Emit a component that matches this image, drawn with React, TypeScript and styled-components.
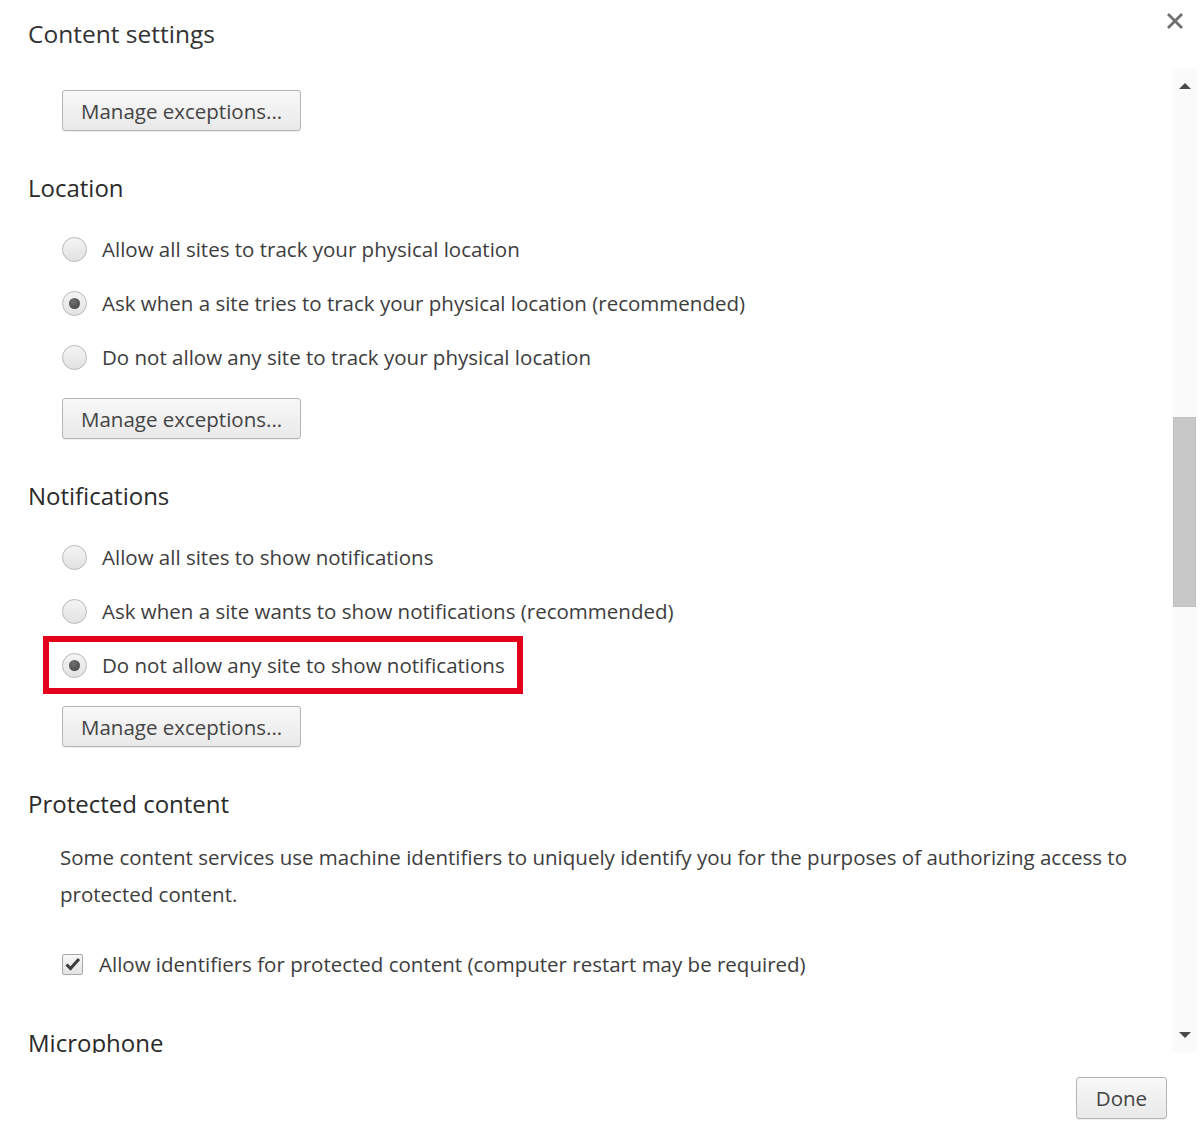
import styled, { createGlobalStyle } from 'styled-components';

type TOption = {
  id: string;
  label: string;
  checked?: boolean;
  highlighted?: boolean;
}

type TSection = {
  id: string;
  title: string;
  options?: Array<TOption>;
  exceptions?: boolean;
}

const locationOptions: Array<TOption> = [
  { id: 'loc-allow', label: 'Allow all sites to track your physical location' },
  { id: 'loc-ask', label: 'Ask when a site tries to track your physical location (recommended)', checked: true },
  { id: 'loc-block', label: 'Do not allow any site to track your physical location' },
];

const notificationOptions: Array<TOption> = [
  { id: 'notif-allow', label: 'Allow all sites to show notifications' },
  { id: 'notif-ask', label: 'Ask when a site wants to show notifications (recommended)' },
  { id: 'notif-block', label: 'Do not allow any site to show notifications', checked: true, highlighted: true },
];

const sections: Array<TSection> = [
  { id: 'location', title: 'Location', options: locationOptions, exceptions: true },
  { id: 'notifications', title: 'Notifications', options: notificationOptions, exceptions: true },
];

const GlobalStyle = createGlobalStyle`
  html, body {
    margin: 0;
    padding: 0;
    background: #fff;
  }
  body {
    font-family: 'Open Sans', 'Noto Sans', sans-serif;
    color: #3a3a3a;
  }
`;

const RadioRow = ({ option }: { option: TOption }) => (
  <Row $highlighted={option.highlighted}>
    <Radio $checked={option.checked} />
    <span>{option.label}</span>
  </Row>
);

const App = (): JSX.Element => {
  return (
    <Dialog>
      <GlobalStyle />
      <Header>
        <Title>Content settings</Title>
        <Close aria-label="close">
          <svg width="16" height="16" viewBox="0 0 16 16">
            <path d="M2 2 L14 14 M14 2 L2 14" stroke="#6e6e6e" strokeWidth="2.8" strokeLinecap="square" />
          </svg>
        </Close>
      </Header>
      <Main>
        <Content>
          <Indent>
            <Button>Manage exceptions...</Button>
          </Indent>
          {sections.map(section => (
            <Section key={section.id}>
              <Heading>{section.title}</Heading>
              <Options>
                {section.options?.map(option => (
                  <RadioRow key={option.id} option={option} />
                ))}
              </Options>
              {section.exceptions && (
                <Indent>
                  <Button>Manage exceptions...</Button>
                </Indent>
              )}
            </Section>
          ))}
          <Section>
            <Heading>Protected content</Heading>
            <Paragraph>
              Some content services use machine identifiers to uniquely identify you for the purposes of authorizing access to protected content.
            </Paragraph>
            <CheckRow>
              <Checkbox>
                <svg width="16" height="14" viewBox="0 0 16 14">
                  <path d="M1.5 7.5 L5.5 11.5 L14 2" fill="none" stroke="#3c3c3c" strokeWidth="3" />
                </svg>
              </Checkbox>
              <span>Allow identifiers for protected content (computer restart may be required)</span>
            </CheckRow>
          </Section>
          <Section $gap={37}>
            <Heading>Microphone</Heading>
          </Section>
        </Content>
        <ScrollBar>
          <Arrow $dir="up" />
          <Track>
            <Thumb />
          </Track>
          <Arrow $dir="down" />
        </ScrollBar>
      </Main>
      <Footer>
        <DoneButton>Done</DoneButton>
      </Footer>
    </Dialog>
  )
}

const Dialog = styled.div`
  width: 1200px;
  height: 1134px;
  display: flex;
  flex-direction: column;
  background: #fff;
  overflow: hidden;
`;

const Header = styled.div`
  height: 68px;
  flex: none;
  position: relative;
  padding-left: 28px;
  box-sizing: border-box;
`;

const Title = styled.h1`
  margin: 0;
  padding-top: 17px;
  font-size: 24.5px;
  line-height: 34px;
  font-weight: 400;
  color: #333;
`;

const Close = styled.div`
  position: absolute;
  top: 12px;
  right: 17px;
  width: 16px;
  height: 16px;
`;

const Main = styled.div`
  height: 985px;
  flex: none;
  display: flex;
`;

const Content = styled.div`
  flex: 1;
  overflow: hidden;
  padding: 22px 0 0 28px;
`;

const Section = styled.section<{ $gap?: number }>`
  margin-top: ${p => p.$gap ?? 42}px;
`;

const Heading = styled.h2`
  margin: 0;
  font-size: 24px;
  line-height: 30px;
  font-weight: 400;
  color: #2a2a2a;
`;

const Options = styled.div`
  display: flex;
  flex-direction: column;
  align-items: flex-start;
  margin-top: 19px;
  padding-left: 34px;
`;

const Indent = styled.div`
  padding-left: 34px;
`;

const Row = styled.label<{ $highlighted?: boolean }>`
  position: relative;
  display: inline-flex;
  align-items: center;
  gap: 15px;
  height: 54px;
  font-size: 20.5px;
  color: #3d3d3d;

  ${p => p.$highlighted && `
    &::after {
      content: '';
      position: absolute;
      top: -2px;
      bottom: -2px;
      left: -19px;
      right: -18px;
      border: 6px solid #e2001a;
      pointer-events: none;
    }
  `}
`;

const Radio = styled.span<{ $checked?: boolean }>`
  width: 25px;
  height: 25px;
  flex: none;
  box-sizing: border-box;
  border-radius: 50%;
  border: 1px solid #b9b9b9;
  background: linear-gradient(#f4f4f4, #e2e2e2);
  display: flex;
  align-items: center;
  justify-content: center;

  &::before {
    content: '';
    display: ${p => (p.$checked ? 'block' : 'none')};
    width: 11px;
    height: 11px;
    border-radius: 50%;
    background: radial-gradient(circle at 40% 35%, #707070, #404040);
  }
`;

const Button = styled.button`
  margin-top: 0;
  height: 41px;
  padding: 0 18px;
  font-family: inherit;
  font-size: 20.5px;
  color: #444;
  border: 1px solid #b5b5b5;
  border-radius: 3px;
  background: linear-gradient(#f8f8f8, #e9e9e9);
  box-shadow: 0 1px 0 rgba(0, 0, 0, 0.06);

  ${Options} + ${Indent} > & {
    margin-top: 14px;
  }
`;

const Paragraph = styled.p`
  margin: 20px 0 0 32px;
  max-width: 1080px;
  font-size: 20.5px;
  line-height: 37px;
  color: #3d3d3d;
`;

const CheckRow = styled.label`
  display: flex;
  align-items: center;
  gap: 16px;
  height: 54px;
  margin-top: 24px;
  padding-left: 34px;
  font-size: 20.5px;
  color: #3d3d3d;
`;

const Checkbox = styled.span`
  width: 21px;
  height: 21px;
  flex: none;
  box-sizing: border-box;
  border: 1px solid #a8a8a8;
  border-radius: 2px;
  background: linear-gradient(#f7f7f7, #e4e4e4);
  display: flex;
  align-items: center;
  justify-content: center;
`;

const ScrollBar = styled.div`
  width: 25px;
  margin-right: 3px;
  flex: none;
  display: flex;
  flex-direction: column;
  background: #fbfbfb;
`;

const Arrow = styled.div<{ $dir: 'up' | 'down' }>`
  height: 36px;
  flex: none;
  display: flex;
  align-items: center;
  justify-content: center;

  &::before {
    content: '';
    border-left: 6px solid transparent;
    border-right: 6px solid transparent;
    ${p => (p.$dir === 'up'
      ? 'border-bottom: 6px solid #4a4a4a;'
      : 'border-top: 6px solid #4a4a4a;')}
  }
`;

const Track = styled.div`
  flex: 1;
  position: relative;
`;

const Thumb = styled.div`
  position: absolute;
  top: 313px;
  left: 1px;
  right: 1px;
  height: 190px;
  background: #c8c8c8;
  border: 1px solid #c0c0c0;
  box-sizing: border-box;
`;

const Footer = styled.div`
  flex: 1;
  display: flex;
  justify-content: flex-end;
  align-items: flex-start;
  padding: 24px 33px 0 0;
`;

const DoneButton = styled(Button)`
  width: 91px;
  height: 42px;
  padding: 0;
`;

export default App
